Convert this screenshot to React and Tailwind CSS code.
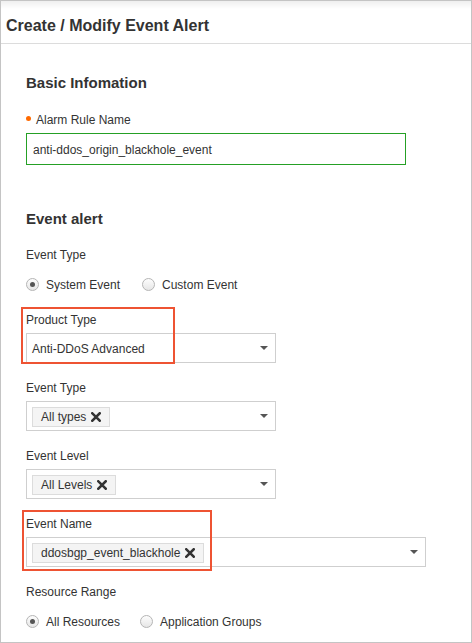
import React from "react";

const font = { fontFamily: '"Liberation Sans", Arial, sans-serif' };

function Caret() {
  return (
    <svg width="8" height="4" viewBox="0 0 8 4" className="shrink-0">
      <path d="M0 0 H8 L4 4 Z" fill="#555" />
    </svg>
  );
}

function XIcon() {
  return (
    <svg width="10" height="10" viewBox="0 0 10 10" className="ml-[5px] shrink-0">
      <path d="M1.3 1.3 L8.7 8.7 M8.7 1.3 L1.3 8.7" stroke="#333" strokeWidth="2.6" strokeLinecap="square" />
    </svg>
  );
}

function Tag({ children }) {
  return (
    <span className="flex items-center h-[20px] px-[8px] bg-[#f4f4f4] border border-[#dcdcdc] text-[12px] text-[#333]">
      <span className="leading-[18px] pt-[1px]">{children}</span>
      <XIcon />
    </span>
  );
}

function Select({ width, children }) {
  return (
    <div
      className="flex items-center justify-between h-[30px] border border-[#cfcfcf] bg-white pl-[5px] pr-[7px]"
      style={{ width }}
    >
      <div className="flex items-center text-[12px] text-[#333] pt-[1px]">{children}</div>
      <Caret />
    </div>
  );
}

function Label({ children, className = "" }) {
  return (
    <div className={"h-[16px] text-[12px] text-[#333] " + className}>
      <div className="leading-[16px] pt-[1px]">{children}</div>
    </div>
  );
}

function Radio({ checked, label, className = "" }) {
  return (
    <div className={"flex items-center " + className}>
      <span className="relative w-[13px] h-[13px] rounded-full border border-[#b5b5b5] bg-[linear-gradient(#fdfdfd,#e6e6e6)] flex items-center justify-center">
        {checked && <span className="w-[5px] h-[5px] rounded-full bg-[#555]" />}
      </span>
      <span className="ml-[7px] text-[12px] text-[#333] leading-[16px] pt-[1px]">{label}</span>
    </div>
  );
}

export default function App() {
  return (
    <div style={font} className="w-[472px] h-[643px] border border-[#c4c4c4] bg-white overflow-hidden">
      <div className="h-[43px] border-b border-[#dcdcdc] bg-[linear-gradient(#efefef,#ffffff_8px)] pl-[5px] pt-[15px]">
        <div className="text-[16px] leading-[20px] font-bold text-[#333]">Create / Modify Event Alert</div>
      </div>
      <div className="pl-[25px]">
        <div className="mt-[29px] text-[15px] leading-[20px] font-bold text-[#333]">Basic Infomation</div>
        <div className="mt-[18px] h-[16px] flex items-center">
          <span className="w-[5px] h-[5px] rounded-full bg-[#ff6a00] mr-[5px] -mt-[2px]" />
          <span className="text-[12px] leading-[16px] text-[#333] pt-[1px]">Alarm Rule Name</span>
        </div>
        <div className="mt-[6px] w-[380px] h-[32px] border border-[#25a025] flex items-center pl-[6px] text-[12px] text-[#333] pt-[1px]">
          anti-ddos_origin_blackhole_event
        </div>

        <div className="mt-[44px] text-[15px] leading-[20px] font-bold text-[#333]">Event alert</div>
        <Label className="mt-[17px]">Event Type</Label>
        <div className="mt-[14px] flex items-center h-[16px]">
          <Radio checked label="System Event" />
          <Radio label="Custom Event" className="ml-[22px]" />
        </div>

        <div className="relative mt-[19px]">
          <Label>Product Type</Label>
          <div className="mt-[6px]">
            <Select width={250}>Anti-DDoS Advanced</Select>
          </div>
          <div className="absolute -left-[5px] -top-[4px] w-[154px] h-[57px] border-2 border-[#ee5333] pointer-events-none" />
        </div>

        <Label className="mt-[16px]">Event Type</Label>
        <div className="mt-[6px]">
          <Select width={250}>
            <Tag>All types</Tag>
          </Select>
        </div>

        <Label className="mt-[16px]">Event Level</Label>
        <div className="mt-[6px]">
          <Select width={250}>
            <Tag>All Levels</Tag>
          </Select>
        </div>

        <div className="relative mt-[16px]">
          <Label>Event Name</Label>
          <div className="mt-[6px]">
            <Select width={400}>
              <Tag>ddosbgp_event_blackhole</Tag>
            </Select>
          </div>
          <div className="absolute -left-[4px] -top-[5px] w-[190px] h-[61px] border-2 border-[#ee5333] pointer-events-none" />
        </div>

        <Label className="mt-[16px]">Resource Range</Label>
        <div className="mt-[14px] flex items-center h-[16px]">
          <Radio checked label="All Resources" />
          <Radio label="Application Groups" className="ml-[20px]" />
        </div>
      </div>
    </div>
  );
}
